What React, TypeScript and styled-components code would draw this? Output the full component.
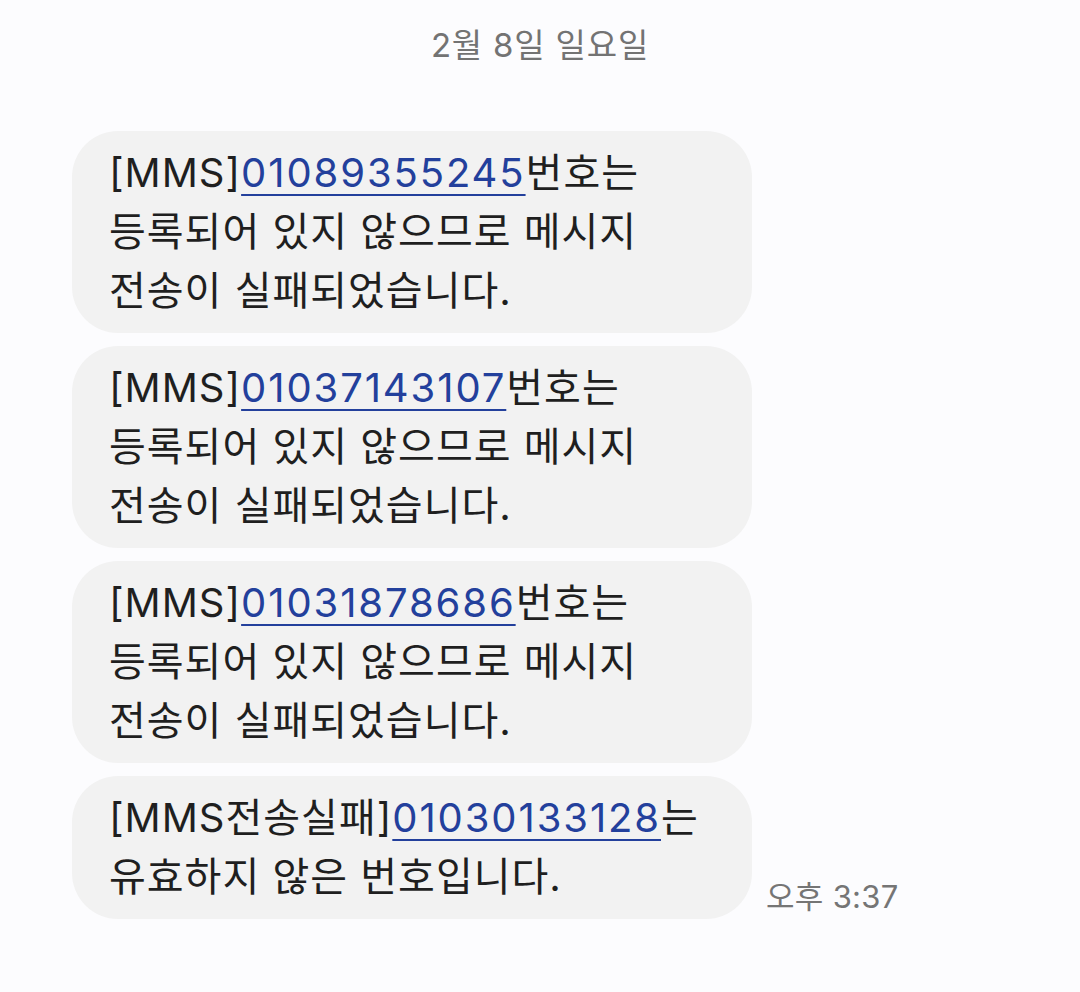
import React from "react";
import styled, { createGlobalStyle } from "styled-components";

const Global = createGlobalStyle`
  html, body { margin: 0; padding: 0; background: #fcfcfe; }
  body { font-family: "Inter", "Noto Sans CJK KR", "Noto Sans", sans-serif; }
`;

const Page = styled.div`
  width: 1080px;
  height: 992px;
  background: #fcfcfe;
  display: flex;
  flex-direction: column;
  box-sizing: border-box;
  padding-top: 22px;
`;

const DateHeader = styled.div`
  text-align: center;
  font-size: 33px;
  line-height: 46px;
  letter-spacing: 0.8px;
  color: #737373;
  margin-bottom: 63px;
`;

const Thread = styled.div`
  display: flex;
  flex-direction: column;
  gap: 13px;
  padding-left: 72px;
`;

const Row = styled.div`
  display: flex;
  align-items: flex-end;
  gap: 14px;
`;

const Bubble = styled.div`
  width: 680px;
  box-sizing: border-box;
  background: #f2f2f2;
  border-radius: 46px;
  padding: 12px 20px 13px 37px;
  font-size: 40px;
  line-height: 59px;
  color: #1f1f1f;
  letter-spacing: 1px;
  white-space: nowrap;
`;

const Link = styled.span`
  color: #23409c;
  letter-spacing: 1.9px;
  text-decoration: underline;
  text-decoration-thickness: 2px;
  text-underline-offset: 7px;
`;

const Time = styled.div`
  font-size: 31px;
  line-height: 40px;
  letter-spacing: 0.3px;
  color: #757575;
  margin-bottom: 2px;
  white-space: nowrap;
`;

const failed = ["01089355245", "01037143107", "01031878686"];

export default function App() {
  return (
    <Page>
      <Global />
      <DateHeader>2월 8일 일요일</DateHeader>
      <Thread>
        {failed.map((n) => (
          <Row key={n}>
            <Bubble>
              [MMS]<Link>{n}</Link>번호는
              <br />
              등록되어 있지 않으므로 메시지
              <br />
              전송이 실패되었습니다.
            </Bubble>
          </Row>
        ))}
        <Row>
          <Bubble>
            [MMS전송실패]<Link>01030133128</Link>는
            <br />
            유효하지 않은 번호입니다.
          </Bubble>
          <Time>오후 3:37</Time>
        </Row>
      </Thread>
    </Page>
  );
}
